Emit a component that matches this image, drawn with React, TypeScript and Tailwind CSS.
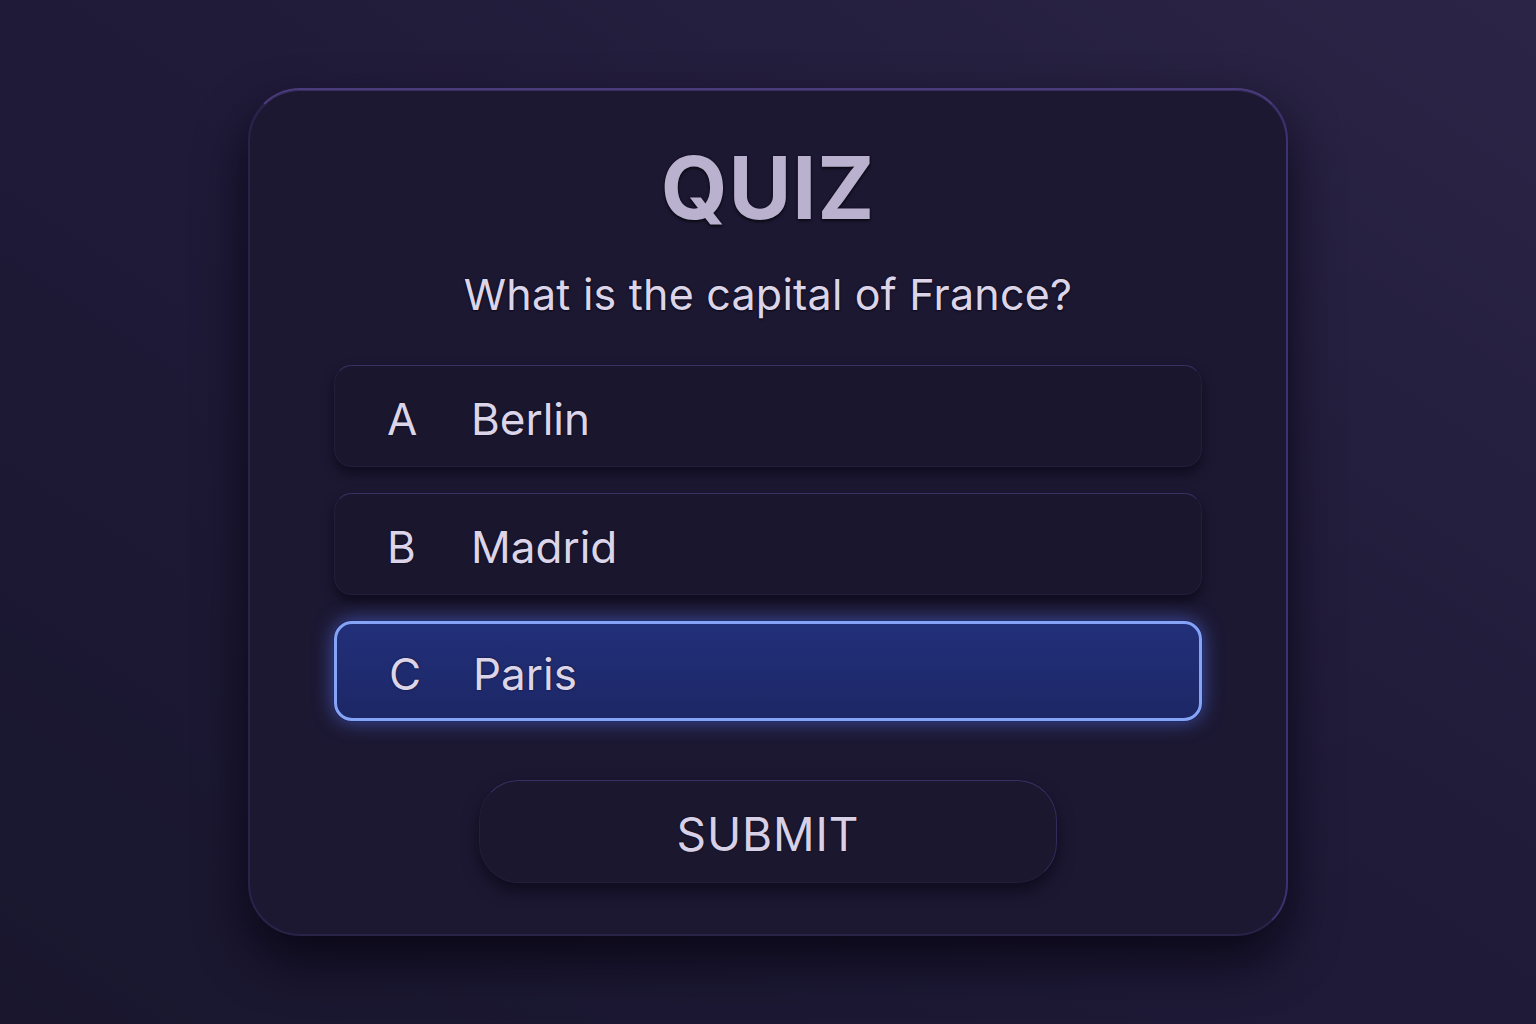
import React from 'react';

const options = [
    { key: 'A', label: 'Berlin', selected: false },
    { key: 'B', label: 'Madrid', selected: false },
    { key: 'C', label: 'Paris', selected: true },
];

const font = { fontFamily: 'Inter, "Noto Sans", sans-serif' };

export default function App() {
    return (
        <div
            className="w-[1536px] h-[1024px] bg-gradient-to-tr from-[#19162e] via-[#1f1a38] to-[#2b2446] flex justify-center pt-[88px]"
            style={font}
        >
            <div className="w-[1040px] h-[848px] rounded-[52px] bg-[#1c1832] border-2 border-[#2a2348] border-t-[#4a3b7c] border-r-[#3d3270] shadow-[0_24px_50px_rgba(5,3,15,0.75),inset_0_1px_0_rgba(130,100,200,0.3)] flex flex-col items-center">
                <h1 className="mt-[55px] text-[86px] leading-none font-bold tracking-[0.01em] text-[#b9b1cd] [text-shadow:0_0_2px_#0c0a18,0_2px_3px_rgba(0,0,0,0.6)]">
                    QUIZ
                </h1>
                <p className="mt-[42px] text-[43px] leading-none tracking-[0.005em] text-[#dcd5ea] [text-shadow:0_0_2px_#0c0a18,0_1px_2px_rgba(0,0,0,0.6)]">
                    What is the capital of France?
                </p>

                <div className="mt-[49px] w-[868px] flex flex-col gap-[26px]">
                    {options.map((o) => (
                        <div
                            key={o.key}
                            className={
                                o.selected
                                    ? 'h-[100px] pt-[5px] rounded-[18px] bg-gradient-to-b from-[#22307a] to-[#1c2766] border-[3px] border-[#85a4f7] shadow-[0_0_20px_rgba(90,120,255,0.6),0_0_0_1px_#0d1030] flex items-center'
                                    : 'h-[102px] pt-[6px] rounded-[18px] bg-[#1a162d] border border-[#241e3c] border-t-[#3a3064] shadow-[0_6px_12px_rgba(5,3,15,0.6)] flex items-center'
                            }
                        >
                            <span className="w-[136px] pl-[52px] text-[44px] leading-none text-[#dcd5ea] [text-shadow:0_0_2px_#0c0a18]">
                                {o.key}
                            </span>
                            <span className="text-[44px] leading-none text-[#dcd5ea] [text-shadow:0_0_2px_#0c0a18]">
                                {o.label}
                            </span>
                        </div>
                    ))}
                </div>

                <button className="mt-[59px] w-[578px] h-[103px] pt-[4px] rounded-[40px] bg-[#1b172e] border border-[#241e3c] border-t-[#3a3064] border-r-[#342b5c] shadow-[0_8px_16px_rgba(5,3,15,0.6)] flex items-center justify-center text-[46px] leading-none text-[#d8d0e6] tracking-[0.02em] [text-shadow:0_0_2px_#0c0a18]">
                    SUBMIT
                </button>
            </div>
        </div>
    );
}
